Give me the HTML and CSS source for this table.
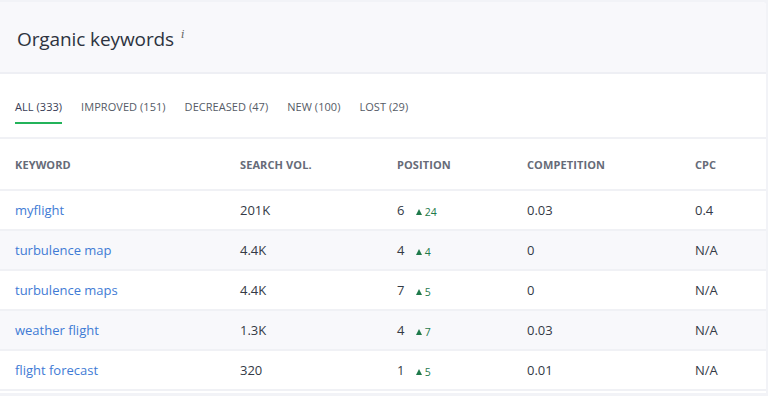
FILE: index.html
```html
<!DOCTYPE html>
<html>
<head>
<meta charset="utf-8">
<link rel="stylesheet" href="styles.css">
</head>
<body>
<div class="card">
  <div class="card-head">
    <h2 class="title">Organic keywords <sup class="info">i</sup></h2>
  </div>
  <div class="tabs">
    <span class="tab active">ALL (333)</span>
    <span class="tab">IMPROVED (151)</span>
    <span class="tab">DECREASED (47)</span>
    <span class="tab">NEW (100)</span>
    <span class="tab">LOST (29)</span>
  </div>
  <div class="table">
    <div class="row head">
      <div>KEYWORD</div><div>SEARCH VOL.</div><div>POSITION</div><div>COMPETITION</div><div>CPC</div>
    </div>
    <div class="row">
      <div class="kw">myflight</div><div>201K</div><div class="pos">6 <span class="up"><span class="tri"></span>24</span></div><div>0.03</div><div>0.4</div>
    </div>
    <div class="row alt">
      <div class="kw">turbulence map</div><div>4.4K</div><div class="pos">4 <span class="up"><span class="tri"></span>4</span></div><div>0</div><div>N/A</div>
    </div>
    <div class="row">
      <div class="kw">turbulence maps</div><div>4.4K</div><div class="pos">7 <span class="up"><span class="tri"></span>5</span></div><div>0</div><div>N/A</div>
    </div>
    <div class="row alt">
      <div class="kw">weather flight</div><div>1.3K</div><div class="pos">4 <span class="up"><span class="tri"></span>7</span></div><div>0.03</div><div>N/A</div>
    </div>
    <div class="row">
      <div class="kw">flight forecast</div><div>320</div><div class="pos">1 <span class="up"><span class="tri"></span>5</span></div><div>0.01</div><div>N/A</div>
    </div>
  </div>
</div>
</body>
</html>
```
FILE: styles.css
```css
* { box-sizing: border-box; }
html, body { margin: 0; padding: 0; }
body {
  background: #f2f3f7;
  font-family: "Open Sans", "Noto Sans", sans-serif;
  color: #343a46;
  width: 768px;
  height: 396px;
  overflow: hidden;
}
.card {
  margin: 2px 2px 0 0;
  background: #fff;
  border-radius: 0 4px 0 0;
  height: 391px;
  overflow: hidden;
}
.card-head {
  background: #f8f8fb;
  height: 72px;
  border-bottom: 2px solid #eeeff4;
  display: flex;
  align-items: center;
  padding-left: 17px;
  padding-top: 4px;
}
.title {
  margin: 0;
  font-size: 19px;
  font-weight: 400;
  color: #2d3340;
  letter-spacing: -0.1px;
}
.info {
  font-style: italic;
  font-size: 11px;
  color: #666;
  font-family: "DejaVu Serif", serif;
  margin-left: 2px;
  vertical-align: 8px;
}
.tabs {
  display: flex;
  gap: 19px;
  padding: 25px 15px 0;
  height: 65px;
  border-bottom: 2px solid #f0f1f5;
  align-items: flex-start;
}
.tab {
  font-size: 11px;
  color: #555b66;
  padding-bottom: 8px;
  letter-spacing: 0.05px;
}
.tab.active {
  color: #383c54;
  border-bottom: 2px solid #23b35a;
}
.row {
  display: grid;
  grid-template-columns: 225px 157px 130px 168px 1fr;
  height: 40px;
  align-items: center;
  padding-left: 15px;
  border-bottom: 2px solid #f0f1f5;
  font-size: 13px;
  color: #343a46;
}
.row.head {
  height: 52px;
  font-size: 11px;
  font-weight: 700;
  color: #666b78;
  letter-spacing: 0.1px;
}
.row.alt { background: #f8f8fb; }
.kw { color: #3f7bd5; }
.up {
  color: #1f7a4b;
  font-size: 10.5px;
  margin-left: 8px;
  display: inline-flex;
  align-items: center;
  gap: 2px;
}
.tri {
  display: inline-block;
  width: 0; height: 0;
  border-left: 3.5px solid transparent;
  border-right: 3.5px solid transparent;
  border-bottom: 6px solid #1f7a4b;
  margin-right: 1px;
}
```
